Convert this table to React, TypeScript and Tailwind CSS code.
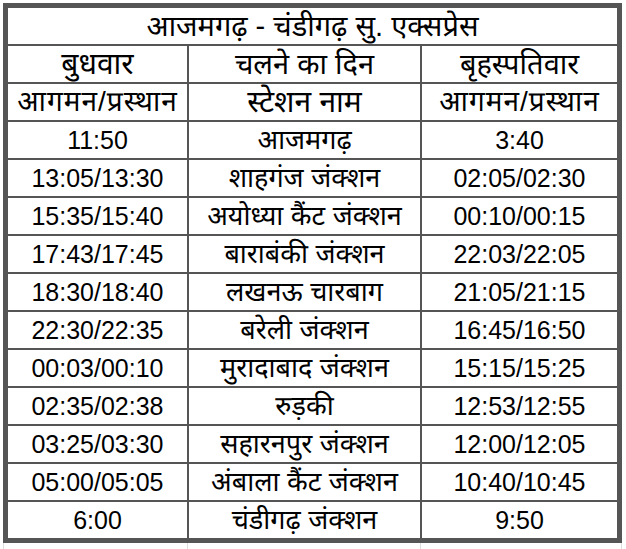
const rows: [string, string, string][] = [
  ['11:50', 'आजमगढ़', '3:40'],
  ['13:05/13:30', 'शाहगंज जंक्शन', '02:05/02:30'],
  ['15:35/15:40', 'अयोध्या कैंट जंक्शन', '00:10/00:15'],
  ['17:43/17:45', 'बाराबंकी जंक्शन', '22:03/22:05'],
  ['18:30/18:40', 'लखनऊ चारबाग', '21:05/21:15'],
  ['22:30/22:35', 'बरेली जंक्शन', '16:45/16:50'],
  ['00:03/00:10', 'मुरादाबाद जंक्शन', '15:15/15:25'],
  ['02:35/02:38', 'रुड़की', '12:53/12:55'],
  ['03:25/03:30', 'सहारनपुर जंक्शन', '12:00/12:05'],
  ['05:00/05:05', 'अंबाला कैंट जंक्शन', '10:40/10:45'],
  ['6:00', 'चंडीगढ़ जंक्शन', '9:50'],
]

const cell = 'flex h-[36px] items-center justify-center bg-white whitespace-nowrap'

export default function App() {
  return (
    <div
      className="min-h-screen w-[626px] bg-white pl-[3px] pt-[3px] text-[25px] leading-none text-black"
      style={{ fontFamily: '"Liberation Sans", "Noto Sans Devanagari", "Noto Sans", sans-serif' }}
    >
      <div className="w-[619px] border-[5px] border-[#555]">
        <div className="grid grid-cols-[179px_231px_195px] gap-[2px] bg-[#555]">
          {/* Title */}
          <div className={`${cell} col-span-3 h-[35px] text-[29px]`}>आजमगढ़ - चंडीगढ़ सु. एक्सप्रेस</div>

          {/* Headers */}
          <div className={`${cell} text-[30px]`}>बुधवार</div>
          <div className={`${cell} text-[29px]`}>चलने का दिन</div>
          <div className={`${cell} text-[29px]`}>बृहस्पतिवार</div>
          <div className={`${cell} text-[28px] tracking-[1px]`}>आगमन/प्रस्थान</div>
          <div className={`${cell} text-[30px]`}>स्टेशन नाम</div>
          <div className={`${cell} text-[28px] tracking-[1px]`}>आगमन/प्रस्थान</div>

          {rows.map(([a, b, c]) => (
            <div key={b} className="contents">
              <div className={cell}>{a}</div>
              <div className={`${cell} text-[27px]`}>{b}</div>
              <div className={cell}>{c}</div>
            </div>
          ))}
        </div>
      </div>

      {/* faint sheet gridlines below the table */}
      <div className="grid h-[7px] w-[619px] grid-cols-[184px_233px_202px]">
        <div className="border-l border-[#ddd]" />
        <div className="border-l border-[#ddd]" />
        <div className="border-l border-r border-[#ddd]" />
      </div>
    </div>
  )
}
